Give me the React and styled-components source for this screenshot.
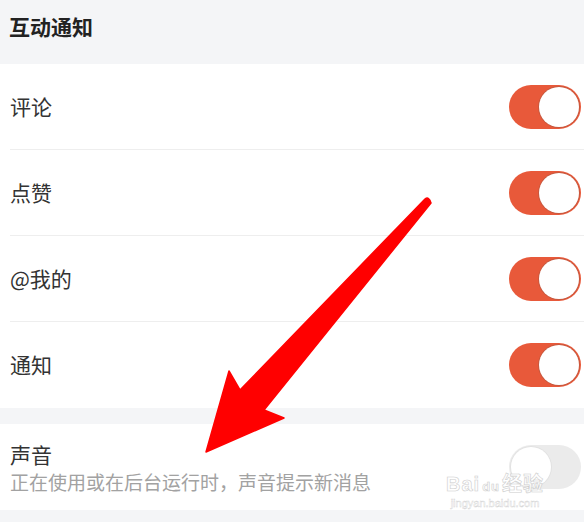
import styled, { createGlobalStyle } from "styled-components"

const Global = createGlobalStyle`
  html, body { margin: 0; padding: 0; background: #f4f5f7; }
  body { font-family: "Noto Sans CJK SC", "Noto Sans", sans-serif; }
`

const items = ["评论", "点赞", "@我的", "通知"]

function Toggle({ on }) {
  return (
    <Track on={on}>
      <Knob on={on} />
    </Track>
  )
}

function App() {
  return (
    <Page>
      <Global />
      <Header>互动通知</Header>
      <Group>
        {items.map((t, i) => (
          <Row key={t}>
            <RowInner last={i === items.length - 1}>
              <Label>{t}</Label>
              <Toggle on />
            </RowInner>
          </Row>
        ))}
      </Group>
      <Group>
        <Row>
          <RowInner last>
            <TextCol>
              <Label>声音</Label>
              <Sub>正在使用或在后台运行时，声音提示新消息</Sub>
            </TextCol>
            <Toggle />
          </RowInner>
        </Row>
      </Group>
      <Arrow viewBox="0 0 584 522" width="584" height="522">
        <path
          d="M425 199 Q429 196 431 203 L264 410 L284 418 L206 452 L229 371 L240 390 Z"
          fill="#ff0000"
          stroke="#ff0000"
          strokeWidth="1.5"
          strokeLinejoin="round"
        />
      </Arrow>
      <Watermark>
        <Mark>Bai<Paw>du</Paw>经验</Mark>
        <Url>jingyan.baidu.com</Url>
      </Watermark>
    </Page>
  )
}

export default App

const Page = styled.div`
  position: relative;
  width: 584px;
  height: 522px;
  overflow: hidden;
  background: #f4f5f7;
`
const Header = styled.div`
  height: 64px;
  display: flex;
  align-items: center;
  padding: 0 9px 12px;
  box-sizing: border-box;
  font-size: 21px;
  font-weight: 700;
  color: #222;
`
const Group = styled.div`
  background: #fff;
  margin-bottom: 16px;
`
const Row = styled.div`
  padding-left: 10px;
`
const RowInner = styled.div`
  height: 86px;
  box-sizing: border-box;
  display: flex;
  align-items: center;
  justify-content: space-between;
  padding-right: 3px;
  border-bottom: ${p => (p.last ? "none" : "1px solid #eeeeee")};
`
const Label = styled.div`
  font-size: 21px;
  color: #333;
  line-height: 1.2;
`
const TextCol = styled.div`
  display: flex;
  flex-direction: column;
  gap: 4px;
  margin-top: 2px;
`
const Sub = styled.div`
  font-size: 19px;
  color: #a2a2a2;
  line-height: 1.2;
`
const Track = styled.div`
  width: 72px;
  height: 44px;
  border-radius: 22px;
  background: ${p => (p.on ? "#e8593a" : "#ebebeb")};
  display: flex;
  align-items: center;
  justify-content: ${p => (p.on ? "flex-end" : "flex-start")};
  padding: 0 2px;
  box-sizing: border-box;
`
const Knob = styled.div`
  width: 40px;
  height: 40px;
  border-radius: 50%;
  background: #fff;
  box-shadow: ${p =>
    p.on ? "0 0 0 1px #c7583e" : "0 0 0 1px #e2e2e2"};
`
const Arrow = styled.svg`
  position: absolute;
  left: 0;
  top: 0;
  pointer-events: none;
`
const Watermark = styled.div`
  position: absolute;
  left: 446px;
  top: 474px;
  display: flex;
  flex-direction: column;
  align-items: center;
  color: #fff;
  font-family: "Liberation Sans", "Noto Sans CJK SC", sans-serif;
  opacity: 0.9;
`
const Mark = styled.div`
  font-size: 20px;
  font-weight: 700;
  line-height: 1;
  -webkit-text-stroke: 0.6px #c9c9c9;
  letter-spacing: 1px;
`
const Paw = styled.span`
  font-size: 13px;
  margin: 0 2px;
`
const Url = styled.div`
  font-size: 11px;
  line-height: 1;
  margin-top: 4px;
  -webkit-text-stroke: 0.4px #cfcfcf;
`
